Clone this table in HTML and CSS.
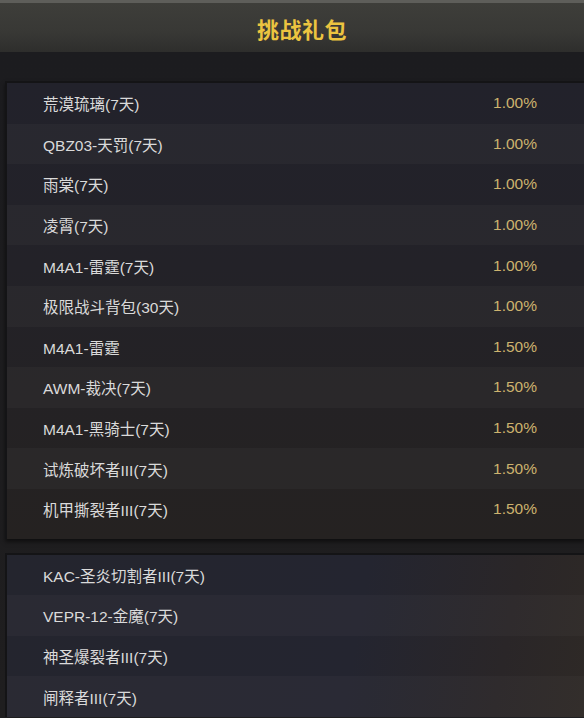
FILE: index.html
```html
<!DOCTYPE html>
<html>
<head>
<meta charset="utf-8">
<link rel="stylesheet" href="styles.css">
</head>
<body>
<div class="header"><h1 class="title">挑战礼包</h1></div>
<div class="content">
  <div class="panel panel-a">
    <div class="row"><span class="name">荒漠琉璃(7天)</span><span class="rate">1.00%</span></div>
    <div class="row"><span class="name">QBZ03-天罚(7天)</span><span class="rate">1.00%</span></div>
    <div class="row"><span class="name">雨棠(7天)</span><span class="rate">1.00%</span></div>
    <div class="row"><span class="name">凌霄(7天)</span><span class="rate">1.00%</span></div>
    <div class="row"><span class="name">M4A1-雷霆(7天)</span><span class="rate">1.00%</span></div>
    <div class="row"><span class="name">极限战斗背包(30天)</span><span class="rate">1.00%</span></div>
    <div class="row"><span class="name">M4A1-雷霆</span><span class="rate">1.50%</span></div>
    <div class="row"><span class="name">AWM-裁决(7天)</span><span class="rate">1.50%</span></div>
    <div class="row"><span class="name">M4A1-黑骑士(7天)</span><span class="rate">1.50%</span></div>
    <div class="row"><span class="name">试炼破坏者III(7天)</span><span class="rate">1.50%</span></div>
    <div class="row"><span class="name">机甲撕裂者III(7天)</span><span class="rate">1.50%</span></div>
  </div>
  <div class="panel panel-b">
    <div class="row"><span class="name">KAC-圣炎切割者III(7天)</span></div>
    <div class="row"><span class="name">VEPR-12-金魔(7天)</span></div>
    <div class="row"><span class="name">神圣爆裂者III(7天)</span></div>
    <div class="row"><span class="name">闸释者III(7天)</span></div>
  </div>
</div>
</body>
</html>
```
FILE: styles.css
```css
html, body {
  margin: 0;
  padding: 0;
}
body {
  width: 584px;
  height: 718px;
  overflow: hidden;
  background: #1e1e20;
  font-family: "Liberation Sans", "Noto Sans CJK SC", sans-serif;
}
.header {
  height: 49px;
  border-top: 3px solid #5e5e5a;
  background: linear-gradient(180deg, #3e3e3a 0%, #383835 60%, #2e2e2c 100%);
  display: flex;
  align-items: center;
  justify-content: center;
  padding-left: 20px;
}
.title {
  margin: 0;
  font-size: 22px;
  font-weight: bold;
  color: #ecc440;
  letter-spacing: 0.5px;
  font-family: "Noto Sans CJK SC", sans-serif;
}
.content {
  padding-top: 29px;
  background: linear-gradient(180deg, #1c1c1f 0%, #1f1e1f 100%);
}
.panel {
  margin-left: 5px;
  border-left: 2px solid #141416;
  border-top: 2px solid #141416;
}
.panel-a {
  padding-bottom: 9px;
  background: linear-gradient(180deg, #22222b 0%, #232228 40%, #252221 100%);
  box-shadow: 0 3px 4px rgba(0,0,0,0.5);
}
.panel-b {
  margin-top: 14px;
  background: linear-gradient(100deg, #24252e 0%, #242530 60%, #2a2628 85%, #2e2926 100%);
}
.row {
  height: 40.6px;
  display: flex;
  align-items: center;
  justify-content: space-between;
  padding-left: 36px;
  padding-right: 47px;
  box-sizing: border-box;
}
.row:nth-child(even) {
  background: rgba(255,255,255,0.028);
}
.name {
  color: #dadada;
  font-size: 15.5px;
}
.rate {
  color: #cdb36e;
  font-size: 15.5px;
}
```
